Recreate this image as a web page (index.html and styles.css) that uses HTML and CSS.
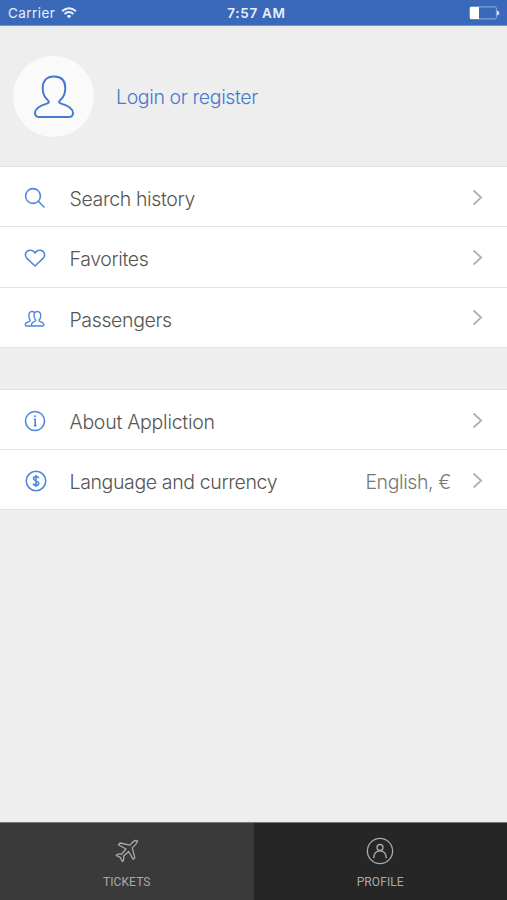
FILE: index.html
```html
<!DOCTYPE html>
<html lang="en">
<head>
<meta charset="utf-8">
<title>Profile</title>
<link rel="stylesheet" href="styles.css">
</head>
<body>
<div class="app">
  <header class="status">
    <div class="carrier"><span>Carrier</span>
      <svg width="16" height="12" viewBox="0 0 16 12" fill="none" stroke="#e6f0fc" stroke-width="1.9"><path d="M1 4.3Q8-1.9 15 4.3M3.5 7Q8 3 12.5 7"/><path d="M5.6 8.9Q8 6.900 10.400 8.900L8 11.300Z" fill="#e6f0fc" stroke="none"/></svg>
    </div>
    <div class="clock">7:57 AM</div>
    <svg class="battery" width="31" height="14" viewBox="0 0 31 14"><rect x=".9" y=".9" width="26.500" height="12" rx="1.500" fill="none" stroke="#8fb0e6"/><path d="M1 1H10V13H1Z" fill="#fff"/><path d="M28 4.500Q30.500 5 30.500 7T28 9.500Z" fill="#c9dcf7"/></svg>
  </header>
  <section class="account">
    <div class="avatar"><svg width="42" height="44" viewBox="0 0 42 44" fill="none" stroke="#437bd0" stroke-width="2" stroke-linejoin="round"><path d="M21 1.500C13.500 1.500 9.700 6 9.700 13C9.700 18.500 11.500 22.500 14.800 25.200C16.700 26.800 16 28 13.800 28.600C7 30.500 2 33.500 2 38.200C2 40.800 3.700 42 6.500 42H35.500C38.300 42 40 40.800 40 38.200C40 33.500 35 30.500 28.200 28.600C26 28 25.300 26.800 27.200 25.200C30.500 22.500 32.300 18.500 32.300 13C32.300 6 28.500 1.500 21 1.500Z"/></svg></div>
    <a class="login">Login or register</a>
  </section>
  <main>
    <ul class="menu">
      <li class="row">
        <svg class="icon" viewBox="0 0 22 22"><circle cx="9" cy="9" r="7.400"/><path d="M14.300 14.300L20.500 20.500"/></svg>
        <span class="label search">Search history</span>
        <svg class="chevron" viewBox="0 0 11 17"><path d="M1.500 1.500L9.200 8.500L1.500 15.500"/></svg>
      </li>
      <li class="row">
        <svg class="icon" viewBox="0 0 22 22"><path d="M11 19L3.200 11.700C1.400 10 1.200 8 1.700 6.300C2.900 2.600 8.500 1.900 11 6C13.500 1.900 19.100 2.600 20.300 6.300C20.800 8 20.600 10 18.800 11.700Z"/></svg>
        <span class="label favorites">Favorites</span>
        <svg class="chevron" viewBox="0 0 11 17"><path d="M1.500 1.500L9.200 8.500L1.500 15.500"/></svg>
      </li>
      <li class="row">
        <svg class="icon people" viewBox="0 0 22 22"><path d="M13.300 3.500C10.900 3.500 9.800 5.300 10 8C10.100 9.800 10.600 11 11.500 11.900C12 12.700 11.300 13.200 10.300 13.600C8.500 14.300 7.500 15.300 7.500 16.800Q7.500 18 8.600 18H18.600Q19.900 18 19.900 16.800C19.900 15.300 18.200 14.300 16.400 13.600C15.200 13.200 14.700 12.700 15.200 11.900C16.200 11 16.600 9.800 16.700 8C16.900 5.300 15.700 3.500 13.300 3.500Z"/><path d="M10.600 4.500C9.900 3.800 9 3.500 8 3.500C5.600 3.500 4.700 5.300 4.900 8C5 9.800 5.300 11 6 11.900C6.500 12.700 5.900 13.200 4.900 13.600C2.700 14.300 1.300 15.300 1.300 16.800Q1.300 18 2.500 18H7.800"/></svg>
        <span class="label passengers">Passengers</span>
        <svg class="chevron" viewBox="0 0 11 17"><path d="M1.500 1.500L9.200 8.500L1.500 15.500"/></svg>
      </li>
    </ul>
    <ul class="menu">
      <li class="row">
        <svg class="icon" viewBox="0 0 22 22"><circle cx="11" cy="11" r="9.500"/><path d="M9.700 9.300H11.200V15.500M9.700 15.600H12.600"/><circle class="dot" cx="11" cy="6.300" r="1"/></svg>
        <span class="label about">About Appliction</span>
        <svg class="chevron" viewBox="0 0 11 17"><path d="M1.500 1.500L9.200 8.500L1.500 15.500"/></svg>
      </li>
      <li class="row">
        <svg class="icon coin" viewBox="0 0 22 22"><circle cx="11" cy="11" r="9.700"/><path d="M13.700 8.300C13.300 5.900 8.500 6 8.500 8.600C8.500 11.300 13.800 10.500 13.800 13.300C13.800 16 8.700 16 8.300 13.500M11 5V17"/></svg>
        <span class="label language">Language and currency</span>
        <span class="value">English, €</span>
        <svg class="chevron" viewBox="0 0 11 17"><path d="M1.500 1.500L9.200 8.500L1.500 15.500"/></svg>
      </li>
    </ul>
  </main>
  <nav class="tabs">
    <a class="tab tickets">
      <svg width="28" height="28" viewBox="0 0 28 28"><path d="M22.800 3.500C20.800 3.700 19.200 5.800 16.800 8.200L7.200 6L5.400 7.800L13 12L8.700 17L4.500 17.200L3.200 18.500L7.200 20.300L9.300 24.500L10.600 23.200L10.700 19L15.600 14.500L20.200 22.400L21.800 20.800L19.300 10.800C21.700 8.500 24.200 6.300 24.400 4.500C24.500 3.700 23.700 3.400 22.800 3.500Z"/></svg>
      <span>TICKETS</span>
    </a>
    <a class="tab profile">
      <svg width="28" height="28" viewBox="0 0 28 28"><circle cx="14" cy="14" r="12.600"/><circle cx="14" cy="10.500" r="3"/><path d="M7.700 21.300C7.900 16.200 10.300 13.900 14 13.900S20.100 16.200 20.300 21.300"/></svg>
      <span>PROFILE</span>
    </a>
  </nav>
</div>
</body>
</html>
```
FILE: styles.css
```css
* { box-sizing: border-box; }
body { margin: 0; background: #eee; font-family: Inter, sans-serif; }
.app { width: 507px; height: 900px; display: flex; flex-direction: column; overflow: hidden; }
.status {
  height: 26px; flex: none; padding: 1px 7px 0 8px;
  display: grid; grid-template-columns: 1fr auto 1fr; align-items: center;
  background: #3a69ba; border-bottom: 1px solid #6e92cf;
  color: #e6f0fc; font-size: 13.5px; line-height: 24px;
}
.carrier { display: flex; align-items: center; gap: 6px; letter-spacing: .45px; }
.clock { font-weight: 600; letter-spacing: .7px; padding-left: 5px; }
.battery { justify-self: end; }
.account { height: 140px; flex: none; display: flex; align-items: center; padding: 0 0 0 13px; gap: 22px; }
.avatar { width: 81px; height: 81px; border-radius: 50%; background: #fafafa; display: grid; place-items: center; margin-top: 1px; }
.login { color: #437bd0; font-size: 19.5px; font-weight: 300; letter-spacing: -.37px; white-space: nowrap; padding-top: 1px; }
.menu { list-style: none; margin: 0 0 41px; padding: 0; background: #fff; border-top: 1px solid #e2e2e2; }
.row { height: 60.3px; border-bottom: 1px solid #e4e4e4; display: flex; align-items: center; padding: 0 24px 0 24px; }
.icon { width: 22px; height: 22px; flex: none; margin-top: 3px; fill: none; stroke: #5187dc; stroke-width: 1.6; stroke-linejoin: round; }
.people { stroke-width: 1.4; }
.coin { position: relative; left: 1px; }
.icon .dot { fill: #5187dc; stroke: none; }
.label { margin: 5px auto 0 23.5px; color: #555; font-size: 19.5px; font-weight: 300; letter-spacing: -.37px; line-height: 24px; white-space: nowrap; }
.about { letter-spacing: -.25px; }
.value { margin: 5px 21px 0 0; color: #777; font-size: 19.5px; font-weight: 300; letter-spacing: -.4px; line-height: 24px; white-space: nowrap; }
.chevron { width: 11px; height: 17px; flex: none; margin-top: 1px; fill: none; stroke: #b0b0b0; stroke-width: 1.8; }
.tabs { height: 78px; flex: none; margin-top: auto; display: grid; grid-template-columns: 1fr 1fr; }
.tab {
  display: flex; flex-direction: column; align-items: center; padding-top: 14px; gap: 9px;
  border-top: 1px solid #777; color: #aaa;
  font: 12px/16px Roboto, sans-serif; letter-spacing: .1px;
}
.tab svg { fill: none; stroke: #aaa; stroke-width: 1.3; stroke-linejoin: round; }
.tickets { background: #3a3a3a; }
.profile { background: #262626; }
```
